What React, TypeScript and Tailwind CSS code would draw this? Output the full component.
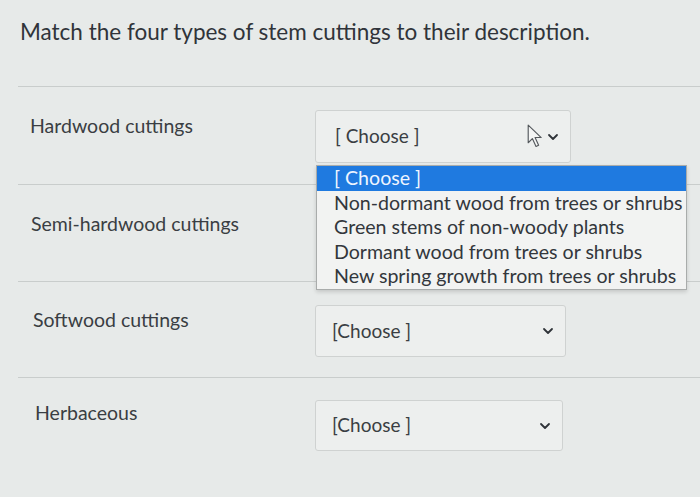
import React from "react";

const options = [
  "[ Choose ]",
  "Non-dormant wood from trees or shrubs",
  "Green stems of non-woody plants",
  "Dormant wood from trees or shrubs",
  "New spring growth from trees or shrubs",
];

const Chevron = () => (
  <svg width="12" height="8" viewBox="0 0 12 8" fill="none">
    <path d="M2 2 L6 6 L10 2" stroke="#2f3338" strokeWidth="1.8" strokeLinecap="round" strokeLinejoin="round" />
  </svg>
);

const Cursor = () => (
  <svg width="17" height="25" viewBox="0 0 16 24" fill="none">
    <path
      d="M1 1 L1 18 L5 14 L8.5 21.5 L11 20.3 L7.6 13 L13.5 13 Z"
      fill="#f4f5f4"
      stroke="#55595d"
      strokeWidth="1.1"
      strokeLinejoin="round"
    />
  </svg>
);

const Select = ({ label, cursor, className }: { label: string; cursor?: boolean; className: string }) => (
  <div
    className={`flex items-center justify-between border border-[#cfd2d1] rounded-[3px] bg-[#edefee] pr-[11px] ${className}`}
  >
    <span className="text-[19px] text-[#3a3e43]">{label}</span>
    <div className="flex items-center gap-[3px]">
      {cursor && <Cursor />}
      <Chevron />
    </div>
  </div>
);

const Row = ({
  label,
  labelPad,
  height,
  children,
}: {
  label: string;
  labelPad: string;
  height: string;
  children?: React.ReactNode;
}) => (
  <div className={`flex border-t border-[#c9cdcc] ml-[18px] ${height}`}>
    <div className={`w-[297px] shrink-0 text-[19.5px] leading-[24px] text-[#3a3e43] ${labelPad}`}>{label}</div>
    <div>{children}</div>
  </div>
);

export default function App() {
  return (
    <div
      className="relative w-[700px] h-[497px] overflow-hidden bg-[#e7eae9]"
      style={{ fontFamily: "Lato, 'Open Sans', sans-serif" }}
    >
      <h1 className="h-[86px] pl-[20px] pt-[18px] text-[22.5px] leading-[28px] text-[#30343a]">
        Match the four types of stem cuttings to their description.
      </h1>
      <Row label="Hardwood cuttings" labelPad="pl-[12px] pt-[27px]" height="h-[98px]">
        <Select label="[ Choose ]" cursor className="mt-[23px] w-[256px] h-[53px] pl-[19px]" />
      </Row>
      <Row label="Semi-hardwood cuttings" labelPad="pl-[13px] pt-[27px]" height="h-[97px]" />
      <Row label="Softwood cuttings" labelPad="pl-[15px] pt-[26px]" height="h-[96px]">
        <Select label="[Choose ]" className="mt-[23px] w-[251px] h-[52px] pl-[16px]" />
      </Row>
      <Row label="Herbaceous" labelPad="pl-[17px] pt-[23px]" height="h-[96px]">
        <Select label="[Choose ]" className="mt-[22px] w-[248px] h-[51px] pl-[16px]" />
      </Row>

      <ul className="absolute left-[316px] top-[165px] w-[371px] whitespace-nowrap border border-[#a9acab] bg-[#f2f3f2] shadow-[0_2px_4px_rgba(0,0,0,0.15)]">
        {options.map((o, i) => (
          <li
            key={o}
            className={`pl-[17px] text-[19.6px] leading-[24.5px] ${
              i === 0 ? "bg-[#1f7ae0] text-[#eef5ff]" : "text-[#33373c]"
            }`}
          >
            {o}
          </li>
        ))}
      </ul>
    </div>
  );
}
